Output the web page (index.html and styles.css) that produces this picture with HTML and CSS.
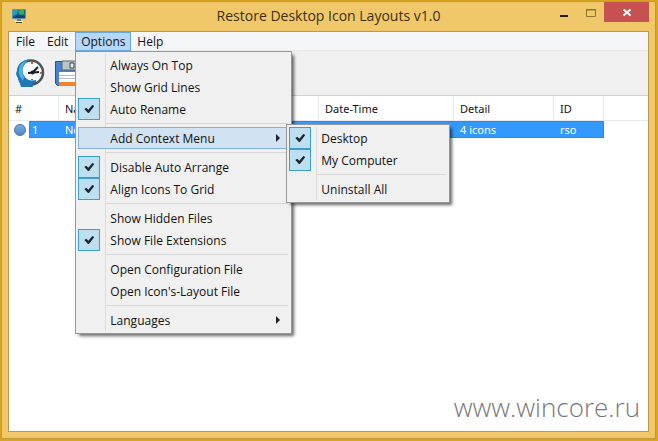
FILE: index.html
```html
<!DOCTYPE html>
<html lang="en">
<head>
  <meta charset="UTF-8" />
  <meta name="viewport" content="width=device-width, initial-scale=1.0"/>
  <title>Restore Desktop Icon Layouts v1.0</title>
  <link rel="stylesheet" href="styles.css">
</head>
<body>
  <div class="window">
    <header class="titlebar">
      <svg class="app-icon" viewBox="0 0 16 16" aria-hidden="true">
        <rect x="1" y="1" width="14" height="10" rx="1" fill="#5f93ab"/>
        <rect x="2" y="2" width="12" height="8" fill="#0e5fa0"/>
        <path d="M2 2h5l-1 4-4 2z" fill="#1f9fc8"/>
        <path d="M7 3l3-1h3v4l-3 1-2-1z" fill="#3dae3c"/>
        <path d="M2 10l5-3 7 1v2z" fill="#123f75"/>
        <path d="M6 11h4v2H6z" fill="#77796f"/>
        <path d="M4 13h8v1H4z" fill="#fffbe8"/>
        <path d="M5 14h6v1H5z" fill="#4b4a3c"/>
      </svg>
      <h1>Restore Desktop Icon Layouts v1.0</h1>
      <div class="window-buttons">
        <button class="minimize" aria-label="Minimize"><svg viewBox="0 0 12 12"><path d="M2 9h8v2H2z" fill="#251a06"/></svg></button>
        <button class="maximize" aria-label="Maximize"><svg viewBox="0 0 12 12"><path d="M1.500 3.500h9v7h-9zM1 4h10" fill="none" stroke="#8f7234"/></svg></button>
        <button class="close" aria-label="Close"><svg viewBox="0 0 12 12"><path d="M2.500 3.500l7 6M9.500 3.500l-7 6" stroke="#fff" stroke-width="2"/></svg></button>
      </div>
    </header>

    <div class="client">
      <nav class="menubar">
        <button>File</button>
        <button>Edit</button>
        <div class="menu-root">
          <button class="open">Options</button>
          <div class="menu options-menu">
            <label class="item"><input type="checkbox">Always On Top</label>
            <label class="item"><input type="checkbox">Show Grid Lines</label>
            <label class="item"><input type="checkbox" checked>Auto Rename</label>
            <hr>
            <div class="submenu-root">
              <button class="item arrow active">Add Context Menu</button>
              <div class="menu context-menu">
                <label class="item"><input type="checkbox" checked>Desktop</label>
                <label class="item"><input type="checkbox" checked>My Computer</label>
                <hr>
                <button class="item">Uninstall All</button>
              </div>
            </div>
            <hr>
            <label class="item"><input type="checkbox" checked>Disable Auto Arrange</label>
            <label class="item"><input type="checkbox" checked>Align Icons To Grid</label>
            <hr>
            <label class="item"><input type="checkbox">Show Hidden Files</label>
            <label class="item"><input type="checkbox" checked>Show File Extensions</label>
            <hr>
            <button class="item">Open Configuration File</button>
            <button class="item">Open Icon's-Layout File</button>
            <hr>
            <button class="item arrow">Languages</button>
          </div>
        </div>
        <button>Help</button>
      </nav>

      <div class="toolbar">
        <button aria-label="Restore layout">
          <svg viewBox="0 0 30 30">
            <circle cx="16" cy="14.500" r="12" fill="#f8fafb" stroke="#4a545d" stroke-width="2.500"/>
            <path d="M16 1.500C8 1 2 6 2 13C0 16 2 18 3 20C3 23 5 24 6 29H18C17 26 17 25 19 25C22 25 21 23 21 22C15 23 12 22 10 19C5 13 8 5 16 1.500Z" fill="#1b78b9"/>
            <path d="M4 12C4 6 9 3 12 3C7 7 6 13 9 19L8 23C6 20 3 17 4 12Z" fill="#4cb1e4"/>
            <path d="M17 15L23 9M13 15L24 14" fill="none" stroke="#16222d" stroke-width="2"/>
            <circle cx="17.500" cy="14.500" r="2" fill="#16222d"/>
            <path d="M17 4v2M25 15h2M17 21v1" stroke="#d65a35" stroke-width="2"/>
          </svg>
        </button>
        <button aria-label="Save layout">
          <svg viewBox="0 0 30 30">
            <path d="M2.500 3.500H28V27.500H4.500L2.500 25.500Z" fill="#4583cc" stroke="#2b4f88"/>
            <path d="M9 3H24V12H9Z" fill="#bcc4c4" stroke="#596673"/>
            <path d="M17 5h4v5h-4z" fill="#e8ecef" stroke="#37495c"/>
            <path d="M6 14H26V25H6Z" fill="#fff"/>
            <path d="M6 17.500H26M6 20.500H26" stroke="#b6bdc4"/>
            <path d="M6 24H26V28H6Z" fill="#f3822b"/>
          </svg>
        </button>
      </div>

      <main class="list">
        <table>
          <colgroup>
            <col class="col-number"><col class="col-name"><col class="col-date"><col class="col-detail"><col class="col-id"><col>
          </colgroup>
          <thead>
            <tr><th>#</th><th>Name</th><th>Date-Time</th><th>Detail</th><th>ID</th><th></th></tr>
          </thead>
          <tbody>
            <tr>
              <td class="number-cell"><div class="number"><span class="dot"></span><span class="index">1</span></div></td>
              <td>New</td><td></td><td>4 icons</td><td class="last">rso</td><td class="empty"></td>
            </tr>
          </tbody>
        </table>
        <p class="site">www.wincore.ru</p>
      </main>
    </div>
  </div>
</body>
</html>
```

FILE: styles.css
```css
* {
  box-sizing: border-box;
}

body {
  display: flex;
  min-height: 100vh;
  margin: 0;
  padding: 1px 2px 2px 1px;
  background: #d9a520;
  font-family: "Open Sans", "Noto Sans", sans-serif;
  font-size: 12px;
  color: #111;
}

button {
  margin: 0;
  padding: 0;
  border: none;
  background: none;
  font: inherit;
  color: inherit;
}

svg {
  display: block;
}

/* window frame */
.window {
  flex: 1;
  display: flex;
  flex-direction: column;
  padding: 0 6px 6px;
  border: 1px solid #c2973a;
  background: #f0c869;
}

.titlebar {
  display: grid;
  grid-template-columns: 1fr auto 1fr;
  align-items: start;
  height: 29px;
}

.app-icon {
  width: 16px;
  height: 16px;
  margin: 6px 0 0 3px;
}

.titlebar h1 {
  margin: 0;
  font-size: 14px;
  line-height: 28px;
  font-weight: normal;
  color: #3d2f12;
}

.window-buttons {
  display: flex;
  justify-content: flex-end;
}

.window-buttons button {
  display: flex;
  align-items: center;
  justify-content: center;
  width: 27px;
  height: 20px;
}

.window-buttons svg {
  width: 12px;
  height: 12px;
}

.window-buttons .close {
  width: 45px;
  background: #c75050;
}

.client {
  flex: 1;
  display: flex;
  flex-direction: column;
  border: 1px solid #b99a55;
  background: #fff;
}

/* menus */
.menubar {
  display: flex;
  height: 19px;
  padding-left: 1px;
  background: #f5f6f7;
  border-bottom: 1px solid #e8e9ea;
}

.menubar > button,
.menu-root > button {
  height: 19px;
  padding: 0 6px;
  line-height: 18px;
}

.menu-root {
  position: relative;
  margin-left: 1px;
}

.menu-root > .open {
  width: 56px;
  padding: 0;
  background: #b5d7f8;
  border: 1px solid #6ba5da;
  line-height: 16px;
}

.menu {
  position: absolute;
  z-index: 2;
  padding: 2px;
  background: #f0f0f0;
  border: 1px solid #979797;
  box-shadow: 3px 3px 3px -1px rgba(0, 0, 0, 0.6);
}

.menu::before {
  content: "";
  position: absolute;
  top: 2px;
  bottom: 2px;
  left: 29px;
  border-left: 1px solid #dcdcdc;
}

.options-menu {
  top: 19px;
  left: 0;
  width: 217px;
}

.context-menu {
  top: -3px;
  left: 208px;
  width: 164px;
}

.submenu-root {
  position: relative;
}

.item {
  display: flex;
  align-items: center;
  width: 100%;
  height: 22px;
  white-space: nowrap;
}

button.item {
  padding-left: 32px;
}

.item.active {
  background: #d1e2f2;
  box-shadow: inset 0 0 0 1px #86b0e0;
}

.item.arrow::after {
  content: "";
  margin: 0 9px 0 auto;
  border: 4px solid transparent;
  border-left-color: #222;
  border-right: none;
}

.item input {
  appearance: none;
  display: grid;
  place-items: center;
  width: 22px;
  height: 22px;
  margin: 0 10px 0 0;
}

.item input:checked {
  position: relative;
  background: #bddff0;
  border: 1px solid #38a0d0;
}

.item input:checked::after {
  content: "";
  width: 10px;
  height: 8px;
  background: #1b2733;
  clip-path: polygon(0 50%, 20% 34%, 40% 58%, 80% 0, 100% 14%, 46% 100%, 36% 100%);
}

.menu hr {
  height: 1px;
  margin: 3px 1px 3px 28px;
  border: none;
  background: #d7d7d7;
}

/* toolbar */
.toolbar {
  display: flex;
  align-items: center;
  gap: 8px;
  height: 45px;
  padding-left: 6px;
  background: #f0f0f0;
  border-bottom: 1px solid #d6d0c4;
}

.toolbar svg {
  width: 30px;
  height: 30px;
}

/* list view */
.list {
  flex: 1;
  display: flex;
  flex-direction: column;
  justify-content: space-between;
  font-family: "Noto Sans", sans-serif;
  font-size: 11px;
}

table {
  width: 100%;
  table-layout: fixed;
  border-collapse: separate;
  border-spacing: 0;
}

.col-number { width: 50px; }
.col-name { width: 260px; }
.col-date { width: 135px; }
.col-detail { width: 100px; }
.col-id { width: 50px; }

th {
  height: 25px;
  padding: 0 0 0 6px;
  border-right: 1px solid #e2eaf2;
  border-bottom: 1px solid #e6eaee;
  text-align: left;
  font-weight: normal;
}

th:last-child {
  border-right: none;
}

td {
  height: 17px;
  padding: 0 0 0 6px;
  background: #3399ff;
  border: solid #4a82bd;
  border-width: 1px 0;
  line-height: 15px;
  color: #fff;
}

td.last {
  border-right-width: 1px;
}

td.number-cell,
td.empty {
  padding: 0;
  background: none;
  border: none;
}

.number {
  display: flex;
  align-items: center;
  gap: 3px;
  padding-left: 5px;
}

.dot {
  width: 12px;
  height: 12px;
  border: 1px solid #4973a4;
  border-radius: 50%;
  background: linear-gradient(#79aadf, #4f88c7);
}

.index {
  flex: 1;
  padding-left: 2px;
  background: #3399ff;
  border: 1px solid #4a82bd;
  border-right: none;
}

.site {
  margin: 0 8px 6px;
  font-family: "Open Sans", sans-serif;
  font-size: 26px;
  line-height: 36px;
  font-weight: 300;
  text-align: right;
  color: #777;
}
```
